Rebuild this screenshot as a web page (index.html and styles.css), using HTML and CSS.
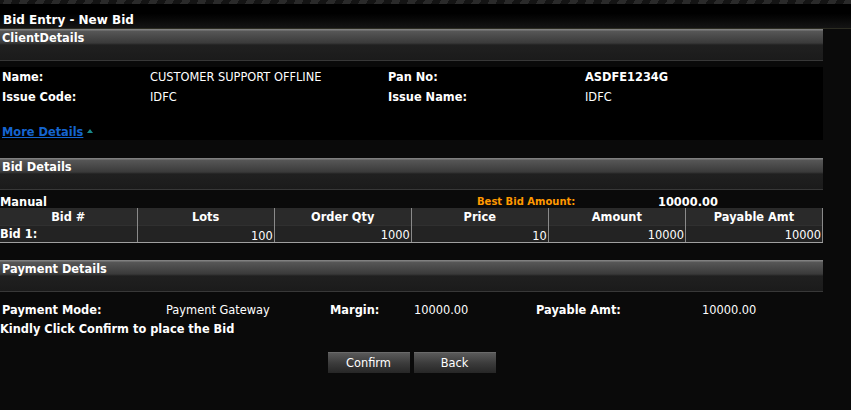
FILE: index.html
```html
<!DOCTYPE html>
<html lang="en">
<head>
    <meta charset="UTF-8">
    <meta name="viewport" content="width=device-width, initial-scale=1.0">
    <title>Bid Entry - New Bid</title>
    <link rel="stylesheet" href="styles.css">
</head>
<body>
    <div class="top-strip"></div>
    <div class="page-title">Bid Entry - New Bid</div>

    <div class="section client-section">
        <div class="section-head">ClientDetails</div>
        <div class="client-box">
            <div class="info-grid">
                <span class="lbl">Name:</span>
                <span>CUSTOMER SUPPORT OFFLINE</span>
                <span class="lbl">Pan No:</span>
                <span class="lbl">ASDFE1234G</span>
                <span class="lbl">Issue Code:</span>
                <span>IDFC</span>
                <span class="lbl">Issue Name:</span>
                <span>IDFC</span>
            </div>
            <a href="#" class="more-link">More Details</a><span class="arrow-up"></span>
        </div>
    </div>

    <div class="section bid-section">
        <div class="section-head">Bid Details</div>
        <div class="manual-row">
            <span class="lbl">Manual</span>
            <span class="best-lbl">Best Bid Amount:</span>
            <span class="lbl">10000.00</span>
        </div>
        <table class="bid-table">
            <thead>
                <tr>
                    <th>Bid #</th>
                    <th>Lots</th>
                    <th>Order Qty</th>
                    <th>Price</th>
                    <th>Amount</th>
                    <th>Payable Amt</th>
                </tr>
            </thead>
            <tbody>
                <tr>
                    <td class="lbl left">Bid 1:</td>
                    <td class="low">100</td>
                    <td>1000</td>
                    <td class="low">10</td>
                    <td>10000</td>
                    <td>10000</td>
                </tr>
            </tbody>
        </table>
    </div>

    <div class="section pay-section">
        <div class="section-head">Payment Details</div>
        <div class="pay-grid">
            <span class="lbl">Payment Mode:</span>
            <span>Payment Gateway</span>
            <span class="lbl">Margin:</span>
            <span>10000.00</span>
            <span class="lbl">Payable Amt:</span>
            <span>10000.00</span>
        </div>
        <div class="note">Kindly Click Confirm to place the Bid</div>
        <div class="actions">
            <button type="button">Confirm</button>
            <button type="button">Back</button>
        </div>
    </div>
</body>
</html>
```

FILE: styles.css
```css
body {
    margin: 0;
    background-color: #0a0a0a;
    color: #fff;
    font-family: "DejaVu Sans", Verdana, sans-serif;
    font-size: 11.4px;
}
.top-strip {
    height: 4px;
    background: repeating-linear-gradient(-60deg, #2a2a2a 0 7px, #141414 7px 14px);
}
.page-title {
    padding: 8px 3px 0;
    height: 16px;
    line-height: 16px;
    font-size: 12px;
    font-weight: bold;
    background: linear-gradient(#000 0, #000 40%, #141414 100%);
    border-bottom: 1px solid #2c2c22;
}
.section {
    width: 823px;
}
.client-section {
    margin-top: 0;
}
.bid-section {
    margin-top: 18px;
}
.pay-section {
    margin-top: 17px;
}
.section-head {
    height: 31px;
    padding-left: 2px;
    line-height: 19px;
    font-weight: bold;
    background: linear-gradient(#808080 0, #808080 1px, #575757 2px, #3a3a3a 14px, #202020 16px, #1b1b1b 100%);
    border-bottom: 1px solid #383838;
}
.client-box {
    margin-top: 6px;
    background-color: #000;
    padding: 0 2px;
    height: 73px;
}
.info-grid {
    display: grid;
    grid-template-columns: 148px 238px 197px auto;
    grid-auto-rows: 20px;
    align-items: center;
}
.lbl {
    font-weight: bold;
}
.more-link {
    display: inline-block;
    margin-top: 18px;
    line-height: 14px;
    color: #1565d0;
    font-weight: bold;
    text-decoration: underline;
}
.arrow-up {
    display: inline-block;
    margin-left: 4px;
    border-left: 3px solid transparent;
    border-right: 3px solid transparent;
    border-bottom: 4px solid #1a8a8a;
    vertical-align: 3px;
}
.manual-row {
    display: grid;
    grid-template-columns: 477px 181px auto;
    align-items: center;
    height: 12px;
    line-height: 12px;
    padding-top: 6px;
}
.best-lbl {
    color: #ff9900;
    font-size: 10px;
    font-weight: bold;
}
.bid-table {
    width: 823px;
    border-collapse: collapse;
    table-layout: fixed;
}
.bid-table th {
    height: 17px;
    padding: 0;
    font-weight: bold;
    background-color: #2a2a2a;
    border-left: 1px solid #8a8a8a;
    border-right: 1px solid #8a8a8a;
}
.bid-table td {
    height: 16px;
    padding: 0 1px 0 0;
    text-align: right;
    vertical-align: bottom;
    line-height: 14px;
    background-color: #232323;
    border-top: 1px solid #303030;
    border-left: 1px solid #8a8a8a;
    border-right: 1px solid #8a8a8a;
    border-bottom: 1px solid #a0a0a0;
}
.bid-table th:first-child,
.bid-table td:first-child {
    border-left: none;
}
.bid-table td.left {
    text-align: left;
    vertical-align: middle;
}
.bid-table td.low {
    line-height: 12px;
}
.pay-grid {
    display: grid;
    grid-template-columns: 164px 164px 84px 122px 166px auto;
    padding: 10px 2px 0;
    height: 16px;
    align-items: center;
}
.note {
    font-weight: bold;
    padding-top: 3px;
    height: 17px;
    line-height: 17px;
}
.actions {
    display: flex;
    justify-content: center;
    gap: 4px;
    padding-top: 14px;
}
.actions button {
    width: 82px;
    height: 21px;
    padding: 0;
    color: #fff;
    font-family: "DejaVu Sans", Verdana, sans-serif;
    font-size: 11.4px;
    border: none;
    border-top: 1px solid #6a6a6a;
    background: linear-gradient(#5a5a5a, #3c3c3c 50%, #262626 100%);
    cursor: pointer;
}
```
